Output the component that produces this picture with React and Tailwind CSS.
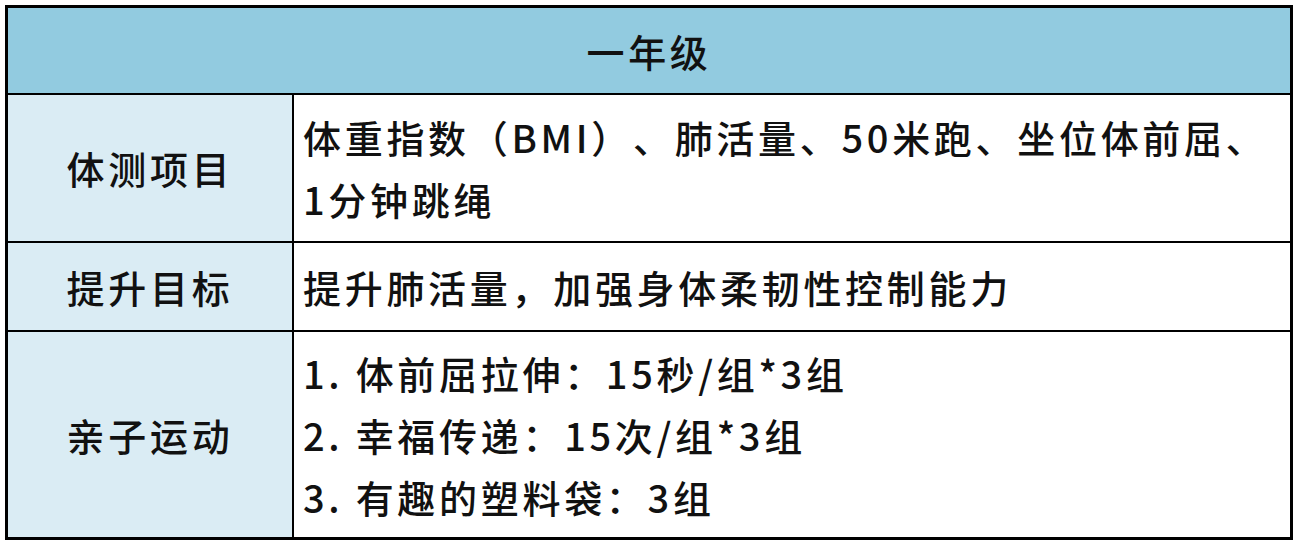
import React from 'react';

const font = { fontFamily: '"Noto Sans CJK SC", "Noto Sans", sans-serif' };

const rows = [
  {
    label: '体测项目',
    height: 'h-[148px]',
    lines: ['体重指数（BMI）、肺活量、50米跑、坐位体前屈、', '1分钟跳绳'],
  },
  {
    label: '提升目标',
    height: 'h-[89px]',
    lines: ['提升肺活量，加强身体柔韧性控制能力'],
  },
  {
    label: '亲子运动',
    height: 'h-[205px]',
    lines: ['1. 体前屈拉伸：15秒/组*3组', '2. 幸福传递：15次/组*3组', '3. 有趣的塑料袋：3组'],
  },
];

const App = () => {
  return (
    <div className="w-[1300px] h-[554px] bg-white pt-[5px] pl-[5px] overflow-hidden" style={font}>
      <div className="w-[1288px] border-[3px] border-black text-[38px] font-medium tracking-[3.7px] text-[#111] leading-[62px] [text-spacing-trim:space-all]">
        {/* Header */}
        <div className="h-[87px] border-b-2 border-black bg-[#92cbe0] flex items-center justify-center">
          一年级
        </div>

        {rows.map((row, idx) => (
          <div
            key={row.label}
            className={`flex ${row.height} ${idx < rows.length - 1 ? 'border-b-2 border-black' : ''}`}
          >
            <div className="w-[286px] shrink-0 border-r-2 border-black bg-[#daecf4] flex items-center justify-center">
              {row.label}
            </div>
            <div className="flex-1 flex flex-col justify-center pl-[9px] whitespace-nowrap">
              {row.lines.map((line) => (
                <div key={line}>{line}</div>
              ))}
            </div>
          </div>
        ))}
      </div>
    </div>
  );
};

export default App;
